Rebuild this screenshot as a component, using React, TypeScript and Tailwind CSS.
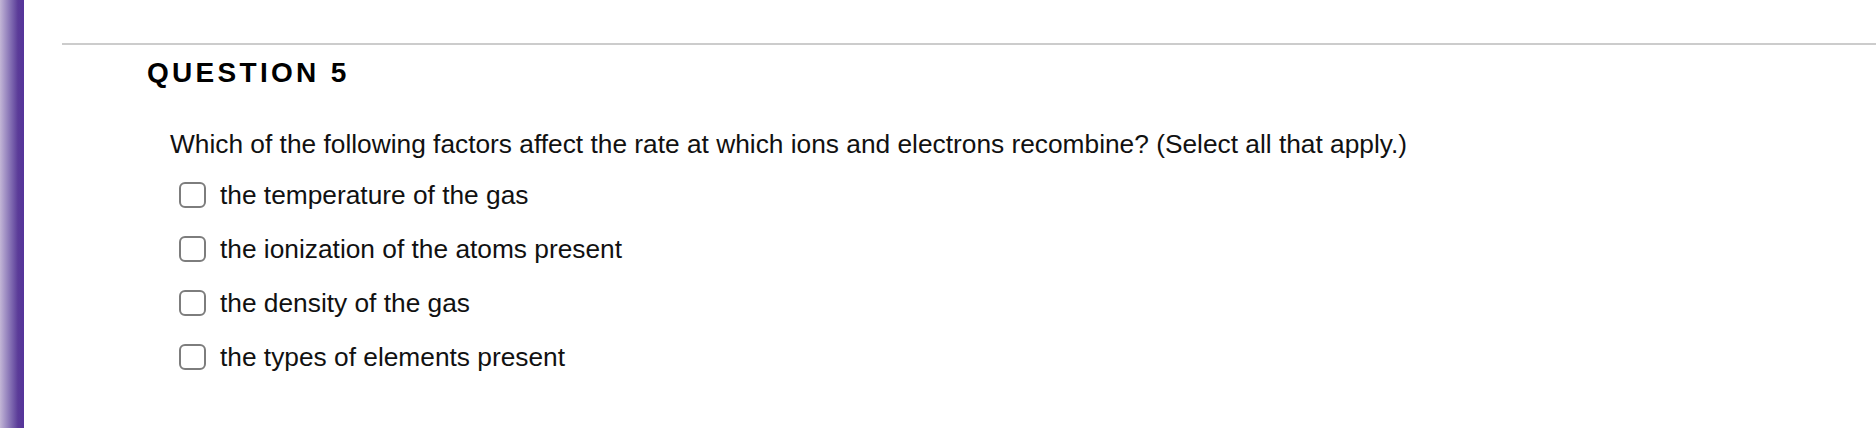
export default function App() {
  const options = [
    'the temperature of the gas',
    'the ionization of the atoms present',
    'the density of the gas',
    'the types of elements present',
  ]

  return (
    <div className="flex h-[428px] w-full bg-white font-['Liberation_Sans',Arial,sans-serif] text-[#111]">
      <div className="w-[24px] shrink-0 bg-gradient-to-r from-[#c3b6d6] via-[#5b3b98] via-75% to-[#55349a]" />
      <div className="flex-1 pl-[38px] pt-[43px]">
        <div className="border-t-2 border-[#cccccc]">
          <h2 className="ml-[85px] mt-[13px] text-[28px] font-bold leading-[30px] tracking-[3.3px] text-black">
            QUESTION 5
          </h2>
          <p className="ml-[108px] mt-[41px] text-[26.3px] leading-[30px]">
            Which of the following factors affect the rate at which ions and electrons recombine? (Select all that apply.)
          </p>
          <ul className="ml-[117px] mt-[21px] flex flex-col gap-[24px]">
            {options.map((o) => (
              <li key={o} className="flex items-center gap-[14px]">
                <span className="h-[26px] w-[27px] shrink-0 rounded-[6px] border-2 border-[#7d7d7d] bg-white" />
                <span className="text-[26.3px] leading-[30px]">{o}</span>
              </li>
            ))}
          </ul>
        </div>
      </div>
    </div>
  )
}
